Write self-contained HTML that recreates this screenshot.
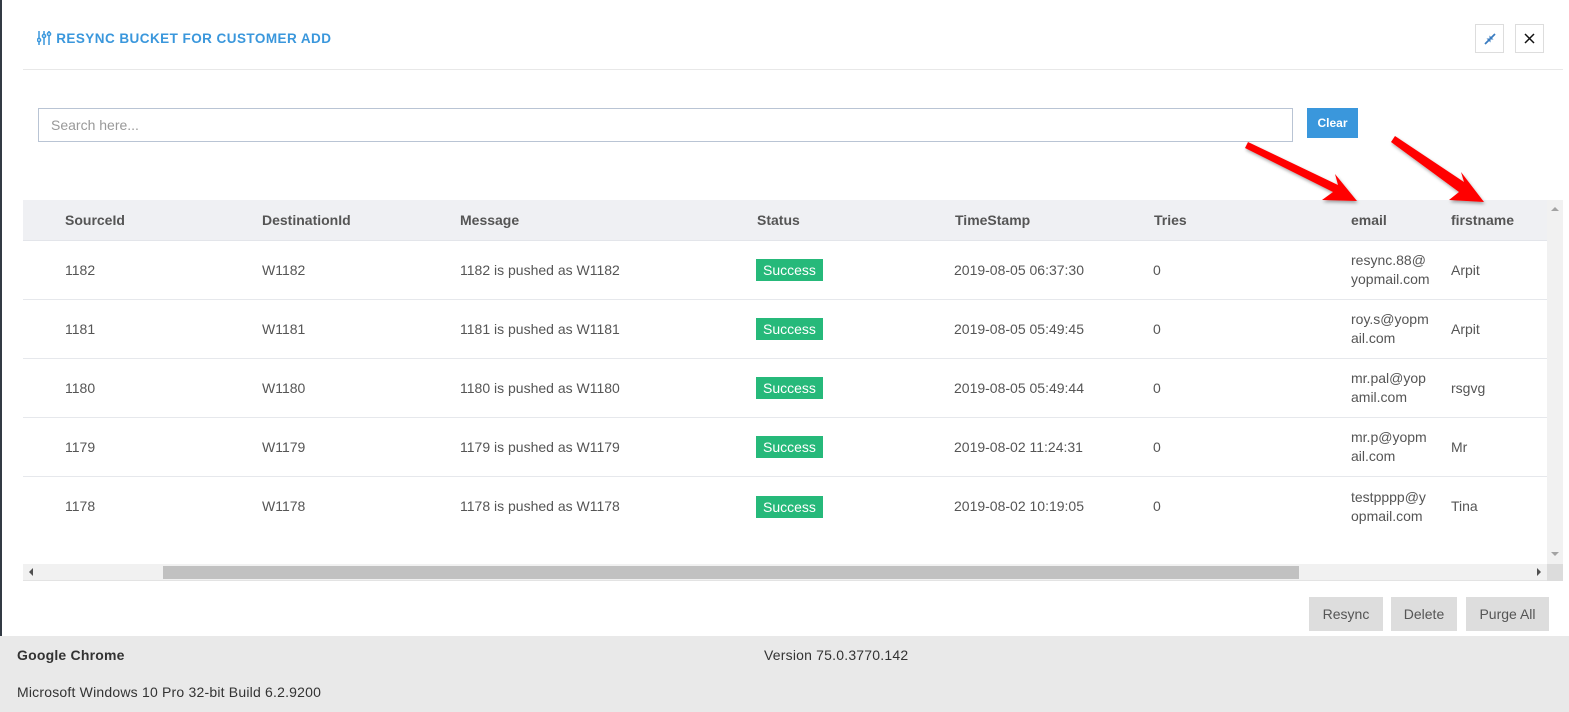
<!DOCTYPE html>
<html><head><style>
*{margin:0;padding:0;box-sizing:border-box}
body{width:1569px;height:712px;position:relative;background:#fff;font-family:"Liberation Sans",Arial,sans-serif;color:#555;font-size:14px;overflow:hidden}
.abs{position:absolute}
.hdr{left:23px;top:200px;width:1524px;height:41px;background:#eff0f3;border-bottom:1px solid #e3e5ea}
.row{position:absolute;left:23px;width:1524px;height:59px;border-bottom:1px solid #e6e8ec}
.c{position:absolute;top:0;height:100%;display:flex;align-items:center;line-height:19px}
.hdr .c{font-weight:bold}
.badge{background:#26b97a;color:#fff;padding:2px 7px;font-size:14px;line-height:18px}
.btn{position:absolute;top:597px;height:34px;background:#ddd;color:#555;font-size:14px;display:flex;align-items:center;justify-content:center}
.ft{color:#333;letter-spacing:0.2px}
</style></head><body>
<div class="abs" style="left:0;top:0;width:2px;height:636px;background:#333a44"></div>
<div class="abs" style="left:37px;top:31px;color:#3a97dc;font-weight:bold;font-size:13.5px;letter-spacing:0.45px">
<svg width="15" height="14" viewBox="0 0 15 14" style="vertical-align:-2px"><g stroke="#3a97dc" stroke-width="1.5" fill="#fff"><line x1="2" y1="0" x2="2" y2="14"/><line x1="7" y1="0" x2="7" y2="14"/><line x1="12" y1="0" x2="12" y2="14"/><circle cx="2" cy="9" r="1.6"/><circle cx="7" cy="5" r="1.6"/><circle cx="12" cy="3" r="1.6"/></g></svg> RESYNC BUCKET FOR CUSTOMER ADD</div>
<div class="abs" style="left:1475px;top:24px;width:29px;height:29px;border:1px solid #ddd;display:flex;align-items:center;justify-content:center"><svg width="12" height="12" viewBox="0 0 12 12"><g stroke="#3a7cc0" stroke-width="1.8"><line x1="1" y1="11" x2="5" y2="7"/><line x1="7" y1="5" x2="11" y2="1"/></g><path d="M2.5 5.5h4v4z M9.5 6.5h-4v-4z" fill="#3a7cc0"/></svg></div>
<div class="abs" style="left:1515px;top:24px;width:29px;height:29px;border:1px solid #ddd;display:flex;align-items:center;justify-content:center"><svg width="11" height="11" viewBox="0 0 11 11"><path d="M1 1L10 10M10 1L1 10" stroke="#111" stroke-width="1.5"/></svg></div>
<div class="abs" style="left:23px;top:69px;width:1540px;height:1px;background:#e8e8e8"></div>
<div class="abs" style="left:38px;top:108px;width:1255px;height:34px;border:1px solid #b9c4d4;padding-left:12px;line-height:32px;color:#999">Search here...</div>
<div class="abs" style="left:1307px;top:108px;width:51px;height:30px;background:#3a97dc;color:#fff;font-weight:bold;font-size:12px;display:flex;align-items:center;justify-content:center">Clear</div>
<div class="abs hdr">
<div class="c" style="left:42px">SourceId</div><div class="c" style="left:239px">DestinationId</div><div class="c" style="left:437px">Message</div><div class="c" style="left:734px">Status</div><div class="c" style="left:932px">TimeStamp</div><div class="c" style="left:1131px">Tries</div><div class="c" style="left:1328px">email</div><div class="c" style="left:1428px">firstname</div>
</div>
<div class="row" style="top:241px"><div class="c" style="left:42px">1182</div><div class="c" style="left:239px">W1182</div><div class="c" style="left:437px">1182 is pushed as W1182</div><div class="c" style="left:733px"><span class="badge">Success</span></div><div class="c" style="left:931px">2019-08-05 06:37:30</div><div class="c" style="left:1130px">0</div><div class="c" style="left:1328px">resync.88@<br>yopmail.com</div><div class="c" style="left:1428px">Arpit</div></div>
<div class="row" style="top:300px"><div class="c" style="left:42px">1181</div><div class="c" style="left:239px">W1181</div><div class="c" style="left:437px">1181 is pushed as W1181</div><div class="c" style="left:733px"><span class="badge">Success</span></div><div class="c" style="left:931px">2019-08-05 05:49:45</div><div class="c" style="left:1130px">0</div><div class="c" style="left:1328px">roy.s@yopm<br>ail.com</div><div class="c" style="left:1428px">Arpit</div></div>
<div class="row" style="top:359px"><div class="c" style="left:42px">1180</div><div class="c" style="left:239px">W1180</div><div class="c" style="left:437px">1180 is pushed as W1180</div><div class="c" style="left:733px"><span class="badge">Success</span></div><div class="c" style="left:931px">2019-08-05 05:49:44</div><div class="c" style="left:1130px">0</div><div class="c" style="left:1328px">mr.pal@yop<br>amil.com</div><div class="c" style="left:1428px">rsgvg</div></div>
<div class="row" style="top:418px"><div class="c" style="left:42px">1179</div><div class="c" style="left:239px">W1179</div><div class="c" style="left:437px">1179 is pushed as W1179</div><div class="c" style="left:733px"><span class="badge">Success</span></div><div class="c" style="left:931px">2019-08-02 11:24:31</div><div class="c" style="left:1130px">0</div><div class="c" style="left:1328px">mr.p@yopm<br>ail.com</div><div class="c" style="left:1428px">Mr</div></div>
<div class="row" style="top:477px;border-bottom:none"><div class="c" style="left:42px">1178</div><div class="c" style="left:239px">W1178</div><div class="c" style="left:437px">1178 is pushed as W1178</div><div class="c" style="left:733px"><span class="badge">Success</span></div><div class="c" style="left:931px">2019-08-02 10:19:05</div><div class="c" style="left:1130px">0</div><div class="c" style="left:1328px">testpppp@y<br>opmail.com</div><div class="c" style="left:1428px">Tina</div></div>
<div class="abs" style="left:1547px;top:200px;width:16px;height:364px;background:#f1f1f1"></div>
<div class="abs" style="left:1551px;top:207px;border:4px solid transparent;border-bottom:4px solid #a3a3a3;border-top:none"></div>
<div class="abs" style="left:1551px;top:552px;border:4px solid transparent;border-top:4px solid #a3a3a3;border-bottom:none"></div>
<div class="abs" style="left:23px;top:564px;width:1524px;height:17px;background:#f1f1f1;border-bottom:1px solid #e3e3e3"></div>
<div class="abs" style="left:1547px;top:564px;width:16px;height:17px;background:#dcdcdc"></div>
<div class="abs" style="left:163px;top:566px;width:1136px;height:13px;background:#c1c1c1"></div>
<div class="abs" style="left:29px;top:568px;border:4px solid transparent;border-right:4px solid #505050;border-left:none"></div>
<div class="abs" style="left:1537px;top:568px;border:4px solid transparent;border-left:4px solid #505050;border-right:none"></div>
<div class="btn" style="left:1309px;width:74px">Resync</div>
<div class="btn" style="left:1391px;width:66px">Delete</div>
<div class="btn" style="left:1466px;width:83px">Purge All</div>
<div class="abs" style="left:0;top:636px;width:1569px;height:76px;background:#e9e9e9"></div>
<div class="abs ft" style="left:17px;top:647px;font-weight:bold">Google Chrome</div>
<div class="abs ft" style="left:764px;top:647px">Version 75.0.3770.142</div>
<div class="abs ft" style="left:17px;top:684px">Microsoft Windows 10 Pro 32-bit Build 6.2.9200</div>
<svg class="abs" style="left:1240px;top:130px" width="329" height="80" viewBox="0 0 329 80">
<defs><filter id="s"><feDropShadow dx="1" dy="2" stdDeviation="1.5" flood-opacity="0.35"/></filter></defs>
<g filter="url(#s)">
<polygon points="8,12 98,55 95,44 117,71 82,70 93,62 5,18" fill="#f00"/>
<polygon points="155,6 224,52 221,42 244,72 209,70 219,62 151,12" fill="#f00"/>
</g>
</svg>
</body></html>
